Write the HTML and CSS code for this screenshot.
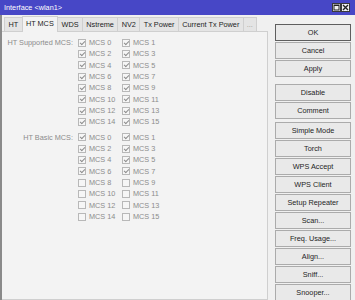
FILE: index.html
```html
<!DOCTYPE html>
<html lang="en">
<head>
    <meta charset="UTF-8">
    <title>Interface &lt;wlan1&gt;</title>
    <link rel="stylesheet" href="styles.css">
</head>
<body>
    <div class="titlebar">
        <span class="title">Interface &lt;wlan1&gt;</span>
        <div class="ctrls">
            <span class="ctrl">
                <svg width="7" height="7" viewBox="0 0 7 7"><rect x="1" y="1" width="5" height="5" fill="none" stroke="#222" stroke-width="1"/><line x1="1" y1="1.5" x2="6" y2="1.5" stroke="#222" stroke-width="1"/></svg>
            </span>
            <span class="ctrl">
                <svg width="7" height="7" viewBox="0 0 7 7"><path d="M1 1 L6 6 M6 1 L1 6" stroke="#222" stroke-width="1.4"/></svg>
            </span>
        </div>
    </div>

    <div class="frame">
        <div class="main">
            <div class="tabs">
                <div class="tab">HT</div>
                <div class="tab active">HT MCS</div>
                <div class="tab">WDS</div>
                <div class="tab">Nstreme</div>
                <div class="tab">NV2</div>
                <div class="tab">Tx Power</div>
                <div class="tab">Current Tx Power</div>
                <div class="tab more">...</div>
            </div>

            <div class="panel">
                <div class="field">
                    <div class="label">HT Supported MCS:</div>
                    <div class="checks">
                        <label class="cb on"><i></i>MCS 0</label>
                        <label class="cb on"><i></i>MCS 1</label>
                        <label class="cb on"><i></i>MCS 2</label>
                        <label class="cb on"><i></i>MCS 3</label>
                        <label class="cb on"><i></i>MCS 4</label>
                        <label class="cb on"><i></i>MCS 5</label>
                        <label class="cb on"><i></i>MCS 6</label>
                        <label class="cb on"><i></i>MCS 7</label>
                        <label class="cb on"><i></i>MCS 8</label>
                        <label class="cb on"><i></i>MCS 9</label>
                        <label class="cb on"><i></i>MCS 10</label>
                        <label class="cb on"><i></i>MCS 11</label>
                        <label class="cb on"><i></i>MCS 12</label>
                        <label class="cb on"><i></i>MCS 13</label>
                        <label class="cb on"><i></i>MCS 14</label>
                        <label class="cb on"><i></i>MCS 15</label>
                    </div>
                </div>

                <div class="field basic">
                    <div class="label">HT Basic MCS:</div>
                    <div class="checks">
                        <label class="cb on"><i></i>MCS 0</label>
                        <label class="cb on"><i></i>MCS 1</label>
                        <label class="cb on"><i></i>MCS 2</label>
                        <label class="cb on"><i></i>MCS 3</label>
                        <label class="cb on"><i></i>MCS 4</label>
                        <label class="cb on"><i></i>MCS 5</label>
                        <label class="cb on"><i></i>MCS 6</label>
                        <label class="cb on"><i></i>MCS 7</label>
                        <label class="cb"><i></i>MCS 8</label>
                        <label class="cb"><i></i>MCS 9</label>
                        <label class="cb"><i></i>MCS 10</label>
                        <label class="cb"><i></i>MCS 11</label>
                        <label class="cb"><i></i>MCS 12</label>
                        <label class="cb"><i></i>MCS 13</label>
                        <label class="cb"><i></i>MCS 14</label>
                        <label class="cb"><i></i>MCS 15</label>
                    </div>
                </div>
            </div>
        </div>

        <div class="actions">
            <button class="btn default">OK</button>
            <button class="btn">Cancel</button>
            <button class="btn">Apply</button>

            <button class="btn gap-lg">Disable</button>
            <button class="btn">Comment</button>

            <button class="btn gap-sm">Simple Mode</button>
            <button class="btn">Torch</button>
            <button class="btn">WPS Accept</button>
            <button class="btn">WPS Client</button>
            <button class="btn">Setup Repeater</button>
            <button class="btn">Scan...</button>
            <button class="btn">Freq. Usage...</button>
            <button class="btn">Align...</button>
            <button class="btn">Sniff...</button>
            <button class="btn">Snooper...</button>
            <button class="btn"></button>
        </div>
    </div>
</body>
</html>
```

FILE: styles.css
```css
:root {
    --title-blue: #4747c6;
    --window-bg: #f0f0f0;
    --panel-bg: #f3f3f3;
    --line: #cfcfcf;
    --text: #1e1e1e;
    --text-disabled: #8c8c8c;
}

* {
    margin: 0;
    padding: 0;
    box-sizing: border-box;
}

body {
    width: 355px;
    height: 300px;
    overflow: hidden;
    background: var(--window-bg);
    font-family: 'Liberation Sans', Arial, sans-serif;
    font-size: 7.3px;
    color: var(--text);
}

.titlebar {
    height: 15px;
    background: var(--title-blue);
    color: #fff;
    display: flex;
    align-items: center;
    justify-content: space-between;
    padding: 0 5px 0 4px;
}

.ctrls {
    display: flex;
}

.ctrl {
    width: 9px;
    height: 9px;
    background: #f2f2f2;
    border: 1px solid #3a3a3a;
    display: flex;
    align-items: center;
    justify-content: center;
}

.frame {
    display: flex;
    height: 285px;
    border-left: 2px solid #8a8a8a;
}

.main {
    width: 266px;
    display: flex;
    flex-direction: column;
}

.tabs {
    height: 16px;
    display: flex;
    align-items: flex-end;
    padding-left: 2px;
}

.tab {
    height: 14px;
    line-height: 13px;
    padding: 0 3.4px;
    background: #e4e4e4;
    border: 1px solid var(--line);
    border-bottom: none;
    margin-right: -1px;
    white-space: nowrap;
}

.tab.active {
    height: 16px;
    line-height: 14px;
    background: var(--panel-bg);
    position: relative;
    z-index: 1;
    margin-bottom: -1px;
}

.tab.more {
    color: #9a9a9a;
    padding: 0 3px;
}

.panel {
    flex: 1;
    background: var(--panel-bg);
    border: 1px solid var(--line);
    border-left: none;
    padding-top: 5px;
}

.field {
    display: flex;
}

.field.basic {
    margin-top: 4px;
}

.label {
    width: 71px;
    text-align: right;
    line-height: 11.33px;
    color: var(--text-disabled);
}

.checks {
    margin-left: 5px;
    display: grid;
    grid-template-columns: 44px 44px;
    grid-auto-rows: 11.33px;
}

.cb {
    display: flex;
    align-items: center;
    gap: 3px;
    color: var(--text-disabled);
    white-space: nowrap;
}

.cb i {
    width: 8px;
    height: 8px;
    border: 1px solid #b8b8b8;
    background: #f6f6f6;
    position: relative;
    flex: none;
}

.cb.on i::after {
    content: '';
    position: absolute;
    left: 2px;
    top: 0;
    width: 2px;
    height: 4px;
    border: solid #8e8e8e;
    border-width: 0 1px 1px 0;
    transform: rotate(45deg);
}

.actions {
    width: 76px;
    margin-left: 7px;
    padding-top: 9px;
    display: flex;
    flex-direction: column;
}

.btn {
    height: 17px;
    margin-bottom: 1px;
    border: 1px solid #ababab;
    background: #e9e9e9;
    font-family: inherit;
    font-size: 7.3px;
    color: var(--text);
    text-align: center;
    white-space: nowrap;
    flex: none;
}

.btn.default {
    border-color: #5e5e5e;
}

.gap-lg {
    margin-top: 6px;
}

.gap-sm {
    margin-top: 2px;
}
```
